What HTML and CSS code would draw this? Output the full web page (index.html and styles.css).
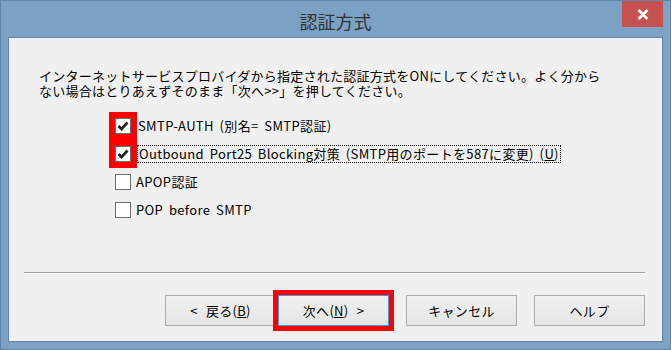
FILE: index.html
```html
<!DOCTYPE html>
<html lang="ja">
<head>
    <meta charset="UTF-8">
    <title>認証方式</title>
    <link rel="stylesheet" href="styles.css">
</head>
<body>
    <div class="window">
        <div class="titlebar">
            <span></span>
            <span class="title">認証方式</span>
            <button class="close">
                <svg width="12" height="11" viewBox="0 0 12 11">
                    <path d="M1.5 1 L10.5 10 M10.5 1 L1.5 10" stroke="#fff" stroke-width="2.6" fill="none"/>
                </svg>
            </button>
        </div>

        <div class="client">
            <p class="intro">インターネットサービスプロバイダから指定された認証方式をONにしてください。よく分から<br>ない場合はとりあえずそのまま「次へ&gt;&gt;」を押してください。</p>

            <div class="options">
                <label class="option marked">
                    <span class="mark"><span class="box checked"></span></span>
                    <span class="text">SMTP-AUTH (別名= SMTP認証)</span>
                </label>
                <label class="option marked">
                    <span class="mark"><span class="box checked"></span></span>
                    <span class="text focus">Outbound Port25 Blocking対策 (SMTP用のポートを587に変更) (<u>U</u>)</span>
                </label>
                <label class="option">
                    <span class="mark"><span class="box"></span></span>
                    <span class="text">APOP認証</span>
                </label>
                <label class="option">
                    <span class="mark"><span class="box"></span></span>
                    <span class="text">POP before SMTP</span>
                </label>
            </div>

            <div class="separator"></div>

            <div class="buttons">
                <div class="pair">
                    <button class="btn">&lt; 戻る(<u>B</u>)</button>
                    <button class="btn default">次へ(<u>N</u>) &gt;</button>
                </div>
                <button class="btn">キャンセル</button>
                <button class="btn">ヘルプ</button>
            </div>
        </div>
    </div>
</body>
</html>
```

FILE: styles.css
```css
body {
    margin: 0;
    font-family: "Noto Sans CJK JP", "Noto Sans", sans-serif;
    overflow: hidden;
}
.window {
    width: 671px;
    height: 350px;
    box-sizing: border-box;
    border: 1px solid #5f84a6;
    background: #7ba2c4;
    display: flex;
    flex-direction: column;
}
.titlebar {
    height: 36px;
    display: grid;
    grid-template-columns: 1fr auto 1fr;
}
.title {
    font-size: 18px;
    line-height: 18px;
    color: #333;
    padding-top: 11px;
}
.close {
    justify-self: end;
    align-self: start;
    width: 41px;
    height: 26px;
    margin-right: 7px;
    border: none;
    padding: 0;
    background: #c75050;
    display: flex;
    align-items: center;
    justify-content: center;
}
.client {
    flex: 1;
    margin: 0 7px 7px 7px;
    border: 1px solid #62839f;
    background: #f0f0f0;
    display: flex;
    flex-direction: column;
}
.intro {
    margin: 30px 0 0 30px;
    font-size: 13px;
    line-height: 15px;
    letter-spacing: 0.25px;
    color: #000;
    white-space: nowrap;
}
.options {
    margin: 14px 0 0 100px;
    display: flex;
    flex-direction: column;
}
.option {
    display: flex;
    align-items: center;
    height: 28px;
    font-size: 13px;
    letter-spacing: 0.35px;
    word-spacing: 2.5px;
    color: #000;
}
.mark {
    width: 28px;
    height: 28px;
    display: flex;
    align-items: center;
    justify-content: center;
}
.marked .mark {
    background: #ff0000;
}
.box {
    width: 16px;
    height: 16px;
    box-sizing: border-box;
    border: 1px solid #707070;
    background: #fff;
}
.box.checked {
    background: #fff url("data:image/svg+xml;utf8,<svg xmlns='http://www.w3.org/2000/svg' width='14' height='14'><path d='M2.5 7 L5.5 10 L11.5 3.5' stroke='%23222' stroke-width='2.6' fill='none'/></svg>") no-repeat center;
}
.text {
    padding: 0 1px;
    line-height: 16px;
    margin-left: -2px;
}
.marked .text {
    margin-left: 0;
}
.focus {
    border: 1px dotted #000;
}
.separator {
    margin: 48px 17px 0 15px;
    border-top: 1px solid #a0a0a0;
    border-bottom: 1px solid #fff;
}
.buttons {
    margin-top: 21px;
    padding-right: 17px;
    display: flex;
    justify-content: flex-end;
    gap: 17px;
}
.pair {
    display: flex;
    gap: 2px;
}
.btn {
    width: 111px;
    height: 31px;
    border: 1px solid #acacac;
    background: linear-gradient(#f0f0f0, #e5e5e5);
    font-family: "Noto Sans CJK JP", "Noto Sans", sans-serif;
    font-size: 13px;
    letter-spacing: 0.3px;
    word-spacing: 5px;
    color: #000;
    padding: 0;
}
.btn.default {
    border-color: #3c9be8;
    outline: 5px solid #ff0000;
}
```
